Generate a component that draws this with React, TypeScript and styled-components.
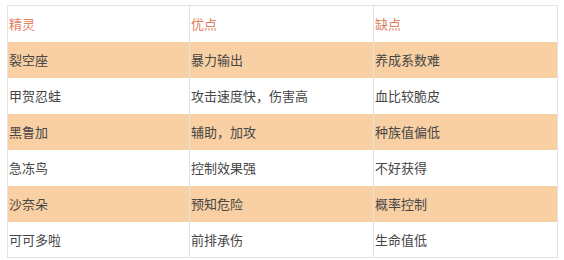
import React from 'react';
import styled, {createGlobalStyle} from 'styled-components';

const GlobalStyle = createGlobalStyle`
    body {
        margin: 0;
        background: #ffffff;
        font-family: "Noto Sans CJK SC", "Noto Sans", sans-serif;
    }
`

const Page = styled.div`
    padding: 5px 0 0 7px;
`

const Table = styled.table`
    border-collapse: collapse;
    table-layout: fixed;
    width: 550px;
    border: 1px solid #e3e3e3;
`

const Row = styled.tr<{$striped: boolean}>`
    height: 36px;
    background-color: ${props => props.$striped ? '#f9d0a3' : '#ffffff'};
`

const HeadCell = styled.th`
    padding: 0 0 0 1px;
    text-align: left;
    font-weight: normal;
    font-size: 13px;
    color: #e2805e;
    border-left: 1px solid #e3e3e3;
    vertical-align: middle;
`

const Cell = styled.td`
    padding: 0 0 0 1px;
    font-size: 13px;
    color: #464646;
    border-left: 1px solid #e3e3e3;
    vertical-align: middle;
`

const rows = [
    ['裂空座', '暴力输出', '养成系数难'],
    ['甲贺忍蛙', '攻击速度快，伤害高', '血比较脆皮'],
    ['黑鲁加', '辅助，加攻', '种族值偏低'],
    ['急冻鸟', '控制效果强', '不好获得'],
    ['沙奈朵', '预知危险', '概率控制'],
    ['可可多啦', '前排承伤', '生命值低'],
];

export default function App() {
    return (
        <Page>
            <GlobalStyle/>
            <Table>
                <colgroup>
                    <col style={{width: 182}}/>
                    <col style={{width: 184}}/>
                    <col style={{width: 184}}/>
                </colgroup>
                <thead>
                    <Row $striped={false}>
                        <HeadCell>精灵</HeadCell>
                        <HeadCell>优点</HeadCell>
                        <HeadCell>缺点</HeadCell>
                    </Row>
                </thead>
                <tbody>
                    {rows.map((r, i) => (
                        <Row key={r[0]} $striped={i % 2 === 0}>
                            {r.map(c => <Cell key={c}>{c}</Cell>)}
                        </Row>
                    ))}
                </tbody>
            </Table>
        </Page>
    );
}
